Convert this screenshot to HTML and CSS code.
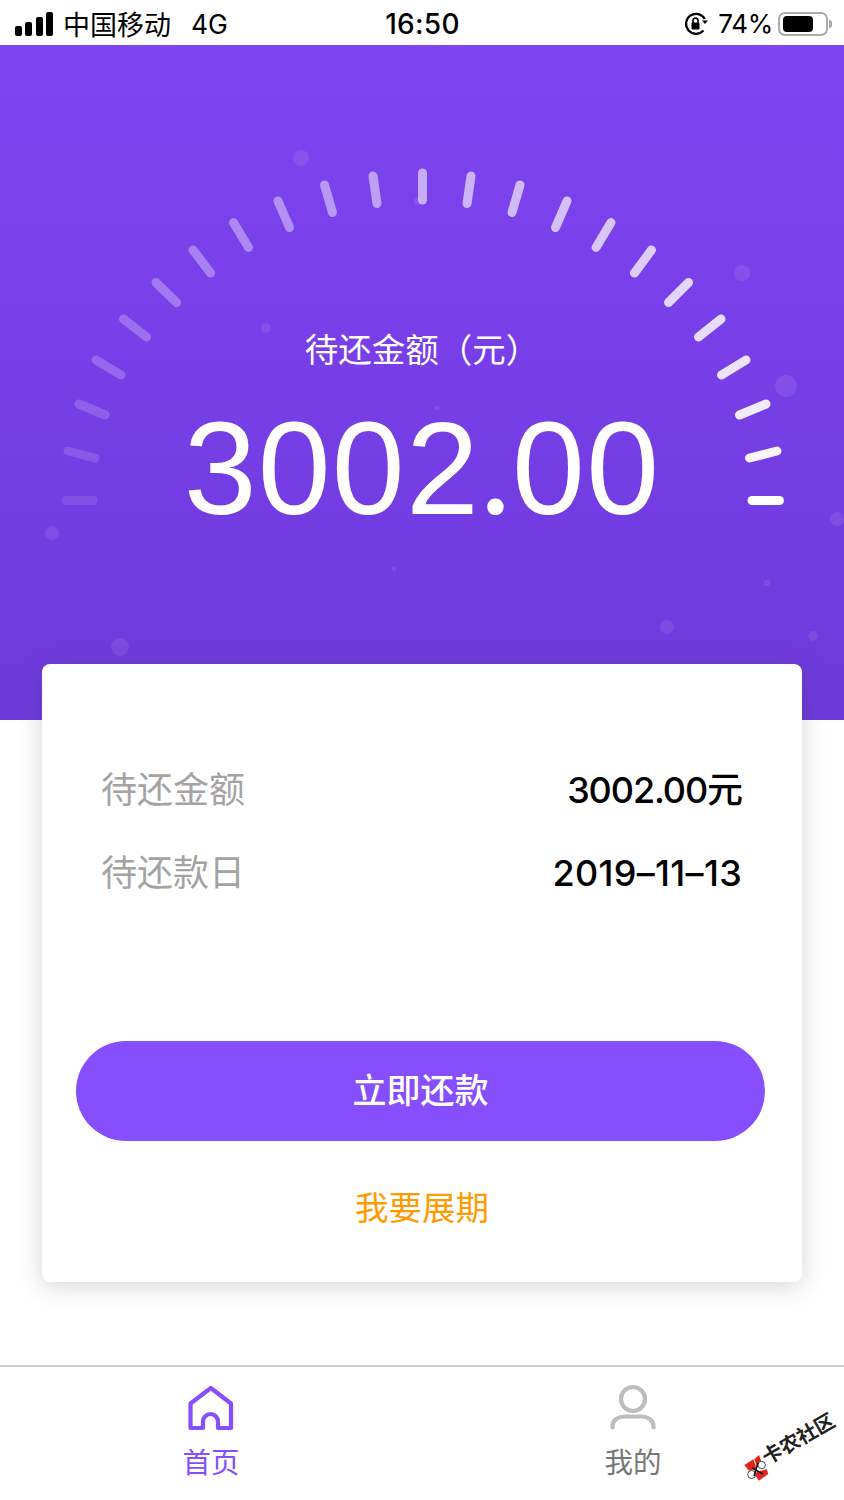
FILE: index.html
```html
<!DOCTYPE html>
<html lang="zh-CN">
<head>
  <meta charset="UTF-8" />
  <title>待还金额</title>
  <link rel="stylesheet" href="styles.css">
</head>
<body>
  <div class="status-bar">
    <div class="status-left">
      <span class="signal"><i class="s1"></i><i class="s2"></i><i class="s3"></i><i class="s4"></i></span>
      <span class="carrier">中国移动</span>
      <span class="network">4G</span>
    </div>
    <div class="clock">16:50</div>
    <div class="status-right">
      <svg class="rotate-lock" width="26" height="26" viewBox="0 0 26 26">
        <path d="M20.500 19.500A10 10 0 1 1 21.800 8" fill="none" stroke="#000" stroke-width="2.200"/>
        <path d="M19 9.500h6l-3 3.600z" fill="#000"/>
        <rect x="8.500" y="11.500" width="8" height="7" rx="1" fill="#000"/>
        <path d="M10 12V9.600a2.500 2.500 0 0 1 5 0V12" fill="none" stroke="#000" stroke-width="1.600"/>
      </svg>
      <span class="battery-text">74%</span>
      <span class="battery"><i></i></span>
      <span class="battery-nub"></span>
    </div>
  </div>

  <section class="hero">
    <svg class="gauge" width="844" height="675" viewBox="0 45 844 675">
      <g fill="#fff" fill-opacity="0.09">
        <circle cx="301" cy="158" r="8"/>
        <circle cx="266" cy="328" r="5"/>
        <circle cx="418" cy="201" r="4"/>
        <circle cx="52" cy="533" r="7"/>
        <circle cx="120" cy="647" r="9"/>
        <circle cx="742" cy="273" r="8"/>
        <circle cx="786" cy="386" r="11"/>
        <circle cx="837" cy="519" r="7"/>
        <circle cx="767" cy="583" r="3"/>
        <circle cx="813" cy="636" r="5"/>
        <circle cx="667" cy="627" r="7"/>
        <circle cx="394" cy="569" r="2.500"/>
        <circle cx="437" cy="408" r="2.500"/>
      </g>
      <g stroke="#fff" stroke-width="9" stroke-linecap="round">
        <line x1="66" y1="500.500" x2="93" y2="500.500" stroke-opacity="0.1"/>
        <line x1="68" y1="451" x2="95" y2="458" stroke-opacity="0.14"/>
        <line x1="79" y1="404" x2="105" y2="415" stroke-opacity="0.18"/>
        <line x1="96" y1="360" x2="121" y2="375" stroke-opacity="0.22"/>
        <line x1="123.500" y1="319" x2="146.500" y2="337" stroke-opacity="0.26"/>
        <line x1="156" y1="282.500" x2="176.500" y2="302.500" stroke-opacity="0.3"/>
        <line x1="193" y1="250" x2="210.500" y2="273" stroke-opacity="0.34"/>
        <line x1="233.500" y1="222.500" x2="248.500" y2="247.500" stroke-opacity="0.38"/>
        <line x1="278" y1="201" x2="289.500" y2="227.500" stroke-opacity="0.42"/>
        <line x1="324.500" y1="185" x2="332.500" y2="212.500" stroke-opacity="0.46"/>
        <line x1="373" y1="176" x2="377" y2="203.500" stroke-opacity="0.5"/>
        <line x1="422.500" y1="173" x2="422.500" y2="200" stroke-opacity="0.56"/>
        <line x1="471" y1="176" x2="467" y2="203.500" stroke-opacity="0.6"/>
        <line x1="520" y1="185" x2="512" y2="212.500" stroke-opacity="0.64"/>
        <line x1="567" y1="201" x2="555.500" y2="227.500" stroke-opacity="0.67"/>
        <line x1="611" y1="222.500" x2="596" y2="247.500" stroke-opacity="0.7"/>
        <line x1="651.500" y1="250" x2="634.500" y2="273" stroke-opacity="0.74"/>
        <line x1="688.500" y1="282.500" x2="668.500" y2="302.500" stroke-opacity="0.78"/>
        <line x1="721" y1="319" x2="698.500" y2="337" stroke-opacity="0.82"/>
        <line x1="746" y1="360" x2="721.500" y2="375" stroke-opacity="0.86"/>
        <line x1="766" y1="404" x2="739.500" y2="415" stroke-opacity="0.9"/>
        <line x1="777" y1="451" x2="749.500" y2="458" stroke-opacity="0.95"/>
        <line x1="779.500" y1="500.500" x2="752" y2="500.500"/>
      </g>
    </svg>
    <div class="hero-label">待还金额（元）</div>
    <div class="hero-amount">3002<span class="amount-dot">.</span>00</div>
  </section>

  <section class="card">
    <div class="rows">
      <div class="row"><span class="row-label">待还金额</span><span class="row-value">3002.00元</span></div>
      <div class="row"><span class="row-label">待还款日</span><span class="row-value row-date">2019–11–13</span></div>
    </div>
    <button class="pay-btn">立即还款</button>
    <a class="extend-link">我要展期</a>
  </section>

  <nav class="tabs">
    <div class="tab tab-active">
      <svg width="48" height="48" viewBox="0 0 48 48">
        <path d="M23.800 4 44 19.500V44H31V37.500a7.500 7.500 0 0 0-15 0V44H3.500V19.500Z" fill="none" stroke="#864efc" stroke-width="4.200" stroke-linejoin="round"/>
      </svg>
      <span>首页</span>
    </div>
    <div class="tab">
      <svg width="48" height="48" viewBox="0 0 48 48">
        <circle cx="24" cy="15" r="12" fill="none" stroke="#bdbdbd" stroke-width="4.200"/>
        <path d="M3.500 43.500V42c0-6 6-9.500 12-9.500h17c6 0 12 3.500 12 9.500v1.500" fill="none" stroke="#bdbdbd" stroke-width="4.200" stroke-linecap="round"/>
      </svg>
      <span>我的</span>
    </div>
  </nav>

  <!-- community stamp, laid over the corner of the tab bar -->
  <svg class="stamp-logo" width="32" height="36" viewBox="0 0 32 36">
    <g fill="#e0261c">
      <path d="M1.300 13 10.300 7.300 13.700 16.300 6 18.700Z"/>
      <path d="M11.300 7.300 16 3 18 8.700 14 14.700Z"/>
      <path d="M13.700 19.700 23.700 17.300 25.300 22 16 28.700 12 23Z"/>
    </g>
    <g fill="#fff" stroke="#222" stroke-width="0.800">
      <circle cx="18.700" cy="13" r="3.700"/>
      <circle cx="8.700" cy="22.500" r="4"/>
    </g>
    <path d="M9 16 20 22M15 11 11 24" fill="none" stroke="#111" stroke-width="1.500"/>
  </svg>
  <span class="stamp-text">卡农社区</span>
</body>
</html>
```

FILE: styles.css
```css
* {
  box-sizing: border-box;
}
html, body {
  margin: 0;
  padding: 0;
}
body {
  position: relative;
  width: 844px;
  height: 1500px;
  overflow: hidden;
  background: #fff;
  font-family: "Inter", "Noto Sans CJK SC", sans-serif;
  color: #000;
}

/* top status bar */
.status-bar {
  display: grid;
  grid-template-columns: 1fr auto 1fr;
  align-items: center;
  height: 45px;
  padding: 3px 12px 0 15px;
}
.status-left, .status-right {
  display: flex;
  align-items: center;
}
.status-right {
  justify-content: flex-end;
}
.signal {
  display: flex;
  align-items: flex-end;
  gap: 3.300px;
  height: 24px;
  margin-right: 10px;
}
.signal i {
  display: block;
  width: 7px;
  border-radius: 2px;
  background: #000;
}
.signal .s1 { height: 10px; }
.signal .s2 { height: 14px; }
.signal .s3 { height: 19px; }
.signal .s4 { height: 24px; }
.carrier {
  font-family: "Noto Sans CJK SC", sans-serif;
  font-size: 27px;
  line-height: 32px;
}
.network {
  margin-left: 20px;
  font-size: 26.500px;
  line-height: 32px;
}
.clock {
  margin-left: -2px;
  font-size: 28px;
  font-weight: 500;
  line-height: 32px;
  letter-spacing: 0.300px;
}
.rotate-lock {
  margin-right: 9px;
}
.battery-text {
  font-size: 26px;
  line-height: 32px;
  letter-spacing: -0.300px;
  margin-right: 5px;
}
.battery {
  display: block;
  width: 50px;
  height: 24px;
  padding: 2px 3px;
  border: 2px solid #aaa;
  border-radius: 7px;
}
.battery i {
  display: block;
  width: 30px;
  height: 16px;
  border-radius: 4px;
  background: #000;
}
.battery-nub {
  display: block;
  width: 3px;
  height: 8px;
  margin-left: 1px;
  border-radius: 0 3px 3px 0;
  background: #aaa;
}

/* purple header with the gauge */
.hero {
  position: relative;
  height: 675px;
  padding-top: 277px;
  background: linear-gradient(180deg, #7e45f0 0%, #793fe9 40%, #6e3adb 100%);
  color: #fff;
  text-align: center;
}
.gauge {
  position: absolute;
  left: 0;
  top: 0;
}
.hero-label {
  position: relative;
  font-family: "Noto Sans CJK SC", sans-serif;
  font-size: 33.500px;
  line-height: 52px;
}
.hero-amount {
  position: relative;
  margin-top: 16px;
  font-family: "Liberation Sans", sans-serif;
  font-size: 131px;
  line-height: 148px;
  letter-spacing: 1.200px;
}
.amount-dot {
  font-family: "Lato", sans-serif;
}

/* white summary card */
.card {
  position: relative;
  display: flex;
  flex-direction: column;
  align-items: center;
  width: 760px;
  height: 618px;
  margin: -56px auto 0;
  padding: 84px 34px 0;
  border-radius: 8px;
  background: #fff;
  box-shadow: 0 4px 24px rgba(60, 50, 50, 0.2);
}
.rows {
  width: 100%;
  padding: 0 26px 0 25px;
}
.row {
  display: flex;
  justify-content: space-between;
  align-items: center;
  height: 83px;
}
.row-label {
  margin-top: -6px;
  font-family: "Noto Sans CJK SC", sans-serif;
  font-size: 36px;
  line-height: 48px;
  color: #a3a3a3;
}
.row-value {
  font-size: 36px;
  font-weight: 500;
  line-height: 48px;
  letter-spacing: -1.100px;
}
.row-date {
  letter-spacing: 0.300px;
}
.pay-btn {
  align-self: flex-start;
  width: 689px;
  height: 100px;
  margin-top: 127px;
  padding-bottom: 6px;
  border: 0;
  border-radius: 50px;
  background: #864efc;
  color: #fff;
  font-family: "Noto Sans CJK SC", sans-serif;
  font-size: 34px;
  font-weight: 500;
}
.extend-link {
  margin-top: 42px;
  font-family: "Noto Sans CJK SC", sans-serif;
  font-size: 33.500px;
  line-height: 46px;
  color: #ff9a00;
}

/* bottom tabs */
.tabs {
  display: grid;
  grid-template-columns: 1fr 1fr;
  height: 134px;
  margin-top: 83px;
  padding-top: 17px;
  border-top: 2px solid #ccc;
}
.tab {
  display: flex;
  flex-direction: column;
  align-items: center;
  font-family: "Noto Sans CJK SC", sans-serif;
  font-size: 28.500px;
  line-height: 42px;
  color: #777;
}
.tab span {
  margin-top: 8px;
}
.tab-active {
  color: #864efc;
}

/* community stamp */
.stamp-logo {
  position: absolute;
  left: 743px;
  top: 1452px;
}
.stamp-text {
  position: absolute;
  left: 758px;
  top: 1424px;
  width: 80px;
  font-family: "Noto Sans CJK SC", sans-serif;
  font-size: 20px;
  font-weight: 700;
  line-height: 28px;
  white-space: nowrap;
  color: #222;
  transform: rotate(-30deg);
}
```
